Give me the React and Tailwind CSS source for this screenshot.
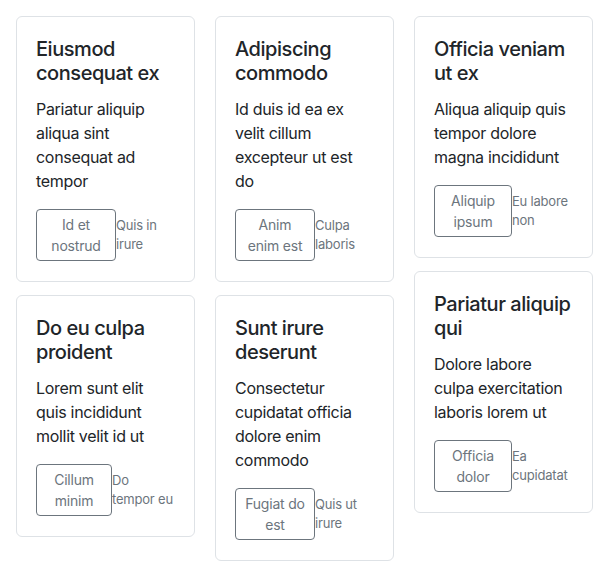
import React from "react";

const columns = [
  [
    {
      title: "Eiusmod consequat ex",
      text: "Pariatur aliquip aliqua sint consequat ad tempor",
      button: "Id et nostrud",
      note: "Quis in irure",
      w: "w-[80px]",
    },
    {
      title: "Do eu culpa proident",
      text: "Lorem sunt elit quis incididunt mollit velit id ut",
      button: "Cillum minim",
      note: "Do\ntempor eu",
      w: "w-[76px]",
    },
  ],
  [
    {
      title: "Adipiscing commodo",
      text: "Id duis id ea ex velit cillum excepteur ut est do",
      button: "Anim enim est",
      note: "Culpa laboris",
      w: "w-[80px]",
    },
    {
      title: "Sunt irure deserunt",
      text: "Consectetur cupidatat officia dolore enim commodo",
      button: "Fugiat do est",
      note: "Quis ut irure",
      w: "w-[80px]",
    },
  ],
  [
    {
      title: "Officia veniam ut ex",
      text: "Aliqua aliquip quis tempor dolore magna incididunt",
      button: "Aliquip ipsum",
      note: "Eu labore non",
      w: "w-[78px]",
    },
    {
      title: "Pariatur aliquip qui",
      text: "Dolore labore culpa exercitation laboris lorem ut",
      button: "Officia dolor",
      note: "Ea cupidatat",
      w: "w-[78px]",
    },
  ],
];

const Card = ({ item }) => (
  <div className="border border-[#dee2e6] rounded-[6px] bg-white py-5 px-[19px]">
    <h5 className="text-[20px] leading-[24px] font-medium tracking-[-0.45px] text-[#212529] mb-3">
      {item.title}
    </h5>
    <p className="text-[16px] leading-[24px] tracking-[-0.3px] text-[#212529] mb-4">
      {item.text}
    </p>
    <div className="flex items-center">
      <button
        className={`${item.w} shrink-0 border border-[#6c757d] rounded-[4px] text-[#6c757d] text-[14px] leading-[21px] tracking-[-0.2px] py-[4px] px-2`}
      >
        {item.button}
      </button>
      <span className="whitespace-pre-line text-[13px] leading-[19.5px] tracking-[-0.2px] text-[#6c757d]">
        {item.note}
      </span>
    </div>
  </div>
);

export default function App() {
  return (
    <div
      className="flex gap-5 p-4 bg-white"
      style={{ fontFamily: "Inter, 'Noto Sans', sans-serif" }}
    >
      {columns.map((col, i) => (
        <div key={i} className="flex-1 flex flex-col gap-[13px]">
          {col.map((item) => (
            <Card key={item.title} item={item} />
          ))}
        </div>
      ))}
    </div>
  );
}
